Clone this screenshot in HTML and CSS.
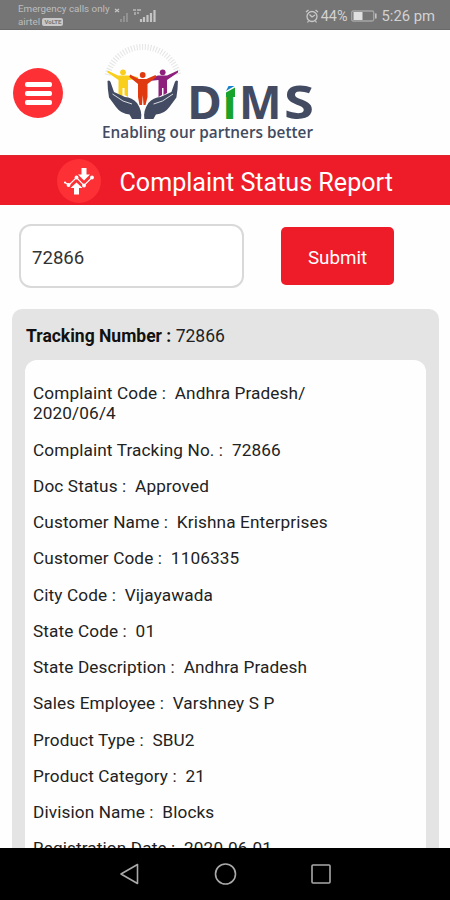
FILE: index.html
```html
<!DOCTYPE html>
<html lang="en">
<head>
<meta charset="UTF-8">
<meta name="viewport" content="width=device-width, initial-scale=1">
<title>Complaint Status Report</title>
<link rel="stylesheet" href="styles.css">
</head>
<body>

<div class="statusbar">
  <div class="carrier">
    <div>Emergency calls only</div>
    <div>airtel <span class="volte">VoLTE</span></div>
  </div>
  <svg class="signal" width="44" height="18" viewBox="0 0 44 18">
    <path d="M2 3l4 3M6 3l-4 3" stroke="#c4c4c4" stroke-width="1.3"/>
    <path d="M8 13v3M11 10v6M14 7v9" stroke="#999" stroke-width="1.6"/>
    <path d="M20 4h3M24 4h4M22 6v3M25 6v2" stroke="#bbb" stroke-width="1.4"/>
    <path d="M28 13v3M31 11v5M34.500 9v7M38 7v9M41.500 4v12" stroke="#c4c4c4" stroke-width="2.200"/>
  </svg>
  <div class="system">
    <svg width="14" height="14" viewBox="0 0 14 14" fill="none" stroke="#c8c8c8" stroke-width="1.3">
      <circle cx="7" cy="7.500" r="5"/>
      <path d="M1 3l2.500-2M13 3l-2.500-2M7 8l-2.500-2.500M7 8l3-2M3.500 12L2.500 13.500M10.500 12l1 1.500"/>
    </svg>
    <span class="percent">44%</span>
    <svg width="26" height="12" viewBox="0 0 26 12">
      <rect x=".7" y="1" width="22" height="10" rx="1.500" fill="none" stroke="#a5a5a5" stroke-width="1.3"/>
      <rect x="2.500" y="2" width="9" height="8" fill="#e0e0e0"/>
      <path d="M24.800 3.500v5" stroke="#c8c8c8" stroke-width="1.5"/>
    </svg>
    <span class="clock">5:26 pm</span>
  </div>
</div>

<header class="header">
  <button class="menu" aria-label="Menu"><span></span><span></span><span></span></button>
  <svg class="logo" width="225" height="105" viewBox="95 40 225 105">
    <!-- rays -->
    <path d="M107.500 75A36.500 36.500 0 0 1 178.500 75" fill="none" stroke="#e6e6e6" stroke-width="6" stroke-dasharray="1.100 1.700"/>
    <!-- people -->
    <g fill="#f9cf1c">
      <circle cx="123" cy="72.300" r="2.900"/>
      <path d="M107.500 70.500L118 75.500H128L138 77V79L128 80V97L124.500 95V88H122.500V98L118.500 94V80L107.500 72.500Z"/>
    </g>
    <g fill="#8e1f7c">
      <circle cx="162.700" cy="72.300" r="2.900"/>
      <path d="M178 70.500L167 75.500H158L148 79L149 81L158.500 80V97L162 95V88H163.500V95L167 93V80L178 72.500Z"/>
    </g>
    <g fill="#e03a10">
      <circle cx="142.700" cy="75" r="2.900"/>
      <path d="M130 74.500L139 79H146.500L155.500 75L156.500 77L147.500 84V97L145.500 105H143.500L142.800 95L142 105H139.500L138 97V84L129.500 77Z"/>
    </g>
    <!-- hands -->
    <g fill="#424b61">
      <path id="hand" d="M107.500 81Q109.500 79.500 110.500 82L114 92L125 97Q132 97.500 137 103Q142.500 111 141 119H132L129.500 114.500Q121 114 116 107L109 97.500Q107.500 89 107.500 81Z"/>
      <use href="#hand" transform="matrix(-1 0 0 1 285.400 0)"/>
    </g>
    <path d="M112.500 94L123 101L132 104M173 94L162.500 101L153.500 104" fill="none" stroke="#fff" stroke-width=".8"/>
    <g class="wordmark">
      <text x="187" y="119" textLength="35" lengthAdjust="spacingAndGlyphs">D</text>
      <text x="222" y="119" class="green">I</text>
      <text x="239" y="119" textLength="42.500" lengthAdjust="spacingAndGlyphs">M</text>
      <text x="284" y="119" textLength="30" lengthAdjust="spacingAndGlyphs">S</text>
    </g>
    <!-- two-tone top of the I -->
    <path d="M225 85H237V96H225Z" fill="#fff"/>
    <path d="M226 92.500L235 87.500V97H226Z" fill="#18a42c"/>
    <path d="M226 91L228.500 86H234.500Z" fill="#1483cf"/>
    <text class="tagline" x="102" y="138" textLength="211" lengthAdjust="spacingAndGlyphs">Enabling our partners better</text>
  </svg>
</header>

<div class="titlebar">
  <div class="report-icon">
    <svg width="32" height="30" viewBox="0 0 32 30" fill="#fff">
      <path d="M2 16.500l4 2.500L13.500 11.500l7.500 8L29 11.500" fill="none" stroke="#fff" stroke-width="1.2"/>
      <circle cx="2" cy="16.500" r="1.100"/>
      <circle cx="5.500" cy="19" r="1.900"/>
      <circle cx="13.500" cy="11.500" r="1.900"/>
      <circle cx="21" cy="19.500" r="1.900"/>
      <circle cx="29" cy="11.500" r="1.900"/>
      <path d="M18.500 2h5v6.500H27L21 14.500l-6-6h3.500z"/>
      <path d="M11 28.500h5V22h3.500L13.500 16.500l-6 5.500H11z"/>
    </svg>
  </div>
  <h1>Complaint Status Report</h1>
</div>

<form class="search">
  <input type="text" value="72866" aria-label="Tracking number">
  <button type="button">Submit</button>
</form>

<main class="panel">
  <h2><b>Tracking Number :</b> 72866</h2>
  <div class="details">
    <p>Complaint Code :&nbsp; Andhra Pradesh/<br>2020/06/4</p>
    <p>Complaint Tracking No. :&nbsp; 72866</p>
    <p>Doc Status :&nbsp; Approved</p>
    <p>Customer Name :&nbsp; Krishna Enterprises</p>
    <p>Customer Code :&nbsp; 1106335</p>
    <p>City Code :&nbsp; Vijayawada</p>
    <p>State Code :&nbsp; 01</p>
    <p>State Description :&nbsp; Andhra Pradesh</p>
    <p>Sales Employee :&nbsp; Varshney S P</p>
    <p>Product Type :&nbsp; SBU2</p>
    <p>Product Category :&nbsp; 21</p>
    <p>Division Name :&nbsp; Blocks</p>
    <p>Registration Date :&nbsp; 2020-06-01</p>
  </div>
</main>

<nav class="navbar">
  <svg width="22" height="24" viewBox="0 0 22 24"><path d="M19.500 2.500v19L3 12z"/></svg>
  <svg width="24" height="24" viewBox="0 0 24 24"><circle cx="12.500" cy="12" r="10"/></svg>
  <svg width="22" height="22" viewBox="0 0 22 22"><rect x="2" y="2" width="18" height="18" rx="1"/></svg>
</nav>

</body>
</html>
```
FILE: styles.css
```css
* { box-sizing: border-box; }
body { margin: 0; height: 900px; display: flex; flex-direction: column; overflow: hidden; background: #fefefe; color: #222; font-family: Roboto, "Liberation Sans", sans-serif; }
svg { display: block; flex: none; }
button { border: none; font-family: inherit; }

.statusbar { flex: none; display: flex; height: 30px; background: #757575; border-bottom: 1px solid #696969; color: #d2d2d2; padding: 0 15px 0 18px; }
.carrier { width: 95px; padding-top: 2px; font-size: 9.8px; line-height: 13px; white-space: nowrap; color: #bdbdbd; }
.volte { display: inline-block; height: 8px; padding: 0 2px; border-radius: 2px; background: #c8c8c8; color: #777; font-size: 6px; line-height: 8px; font-weight: bold; vertical-align: 1px; }
.signal { margin: 6px 0 0 0; }
.system { display: flex; align-items: center; margin-left: auto; padding-top: 3px; font-size: 14.4px; white-space: nowrap; }
.percent { margin: 0 3px 0 2px; }
.clock { margin-left: 5px; font-size: 14.8px; }

.header { flex: none; display: flex; align-items: flex-start; height: 125px; padding: 10px 13px; }
.menu { display: flex; flex-direction: column; align-items: center; justify-content: center; gap: 4px; width: 50px; height: 50px; margin-top: 28px; padding: 0; border-radius: 50%; background: #fd3036; }
.menu span { width: 27px; height: 5px; border-radius: 2px; background: #fff; }
.logo { margin-left: 32px; }
.wordmark { font: bold 46px "Open Sans", sans-serif; fill: #424b61; }
.wordmark .green { fill: #18a42c; }
.tagline { font: 600 15.5px "Open Sans", sans-serif; fill: #424b61; }

.titlebar { flex: none; display: flex; align-items: center; height: 50px; padding-left: 57px; background: #ee1c28; border-top: 1px solid #dc2630; color: #fff; }
.report-icon { display: flex; align-items: center; justify-content: center; width: 44px; height: 44px; border-radius: 50%; background: #fd3036; }
.titlebar h1 { margin: 3px 0 0 18.5px; font-size: 25.1px; font-weight: normal; white-space: nowrap; }

.search { flex: none; display: flex; align-items: center; padding: 19px 19px 21px; }
.search input { width: 225px; height: 64px; padding: 3px 11px 0; border: 2px solid #d9d9d9; border-radius: 12px; background: #fff; color: #333; font: 18.6px Roboto, sans-serif; }
.search button { width: 113px; height: 58px; margin-left: 37px; padding: 4px 0 0; border-radius: 5px; background: #ee1c28; color: #fff; font-size: 18.8px; }

.panel { flex: 1; min-height: 0; margin: 0 11px 0 12px; padding: 0 13px; overflow: hidden; border-radius: 10px 10px 0 0; background: #e4e4e4; }
.panel h2 { margin: 0; height: 51px; padding-left: 1px; font-size: 17.5px; line-height: 55px; font-weight: normal; }
.panel h2 b { color: #111; }
.details { padding: 23px 8px; border-radius: 12px; background: #fefefe; }
.details p { margin: 0 0 16px; font-size: 17.2px; line-height: 20.25px; white-space: nowrap; letter-spacing: .12px; }

.navbar { flex: none; display: flex; align-items: center; justify-content: center; gap: 73px; height: 52px; background: #000; }
.navbar svg { fill: none; stroke: #a9a9a9; stroke-width: 1.6; stroke-linejoin: round; }
```
